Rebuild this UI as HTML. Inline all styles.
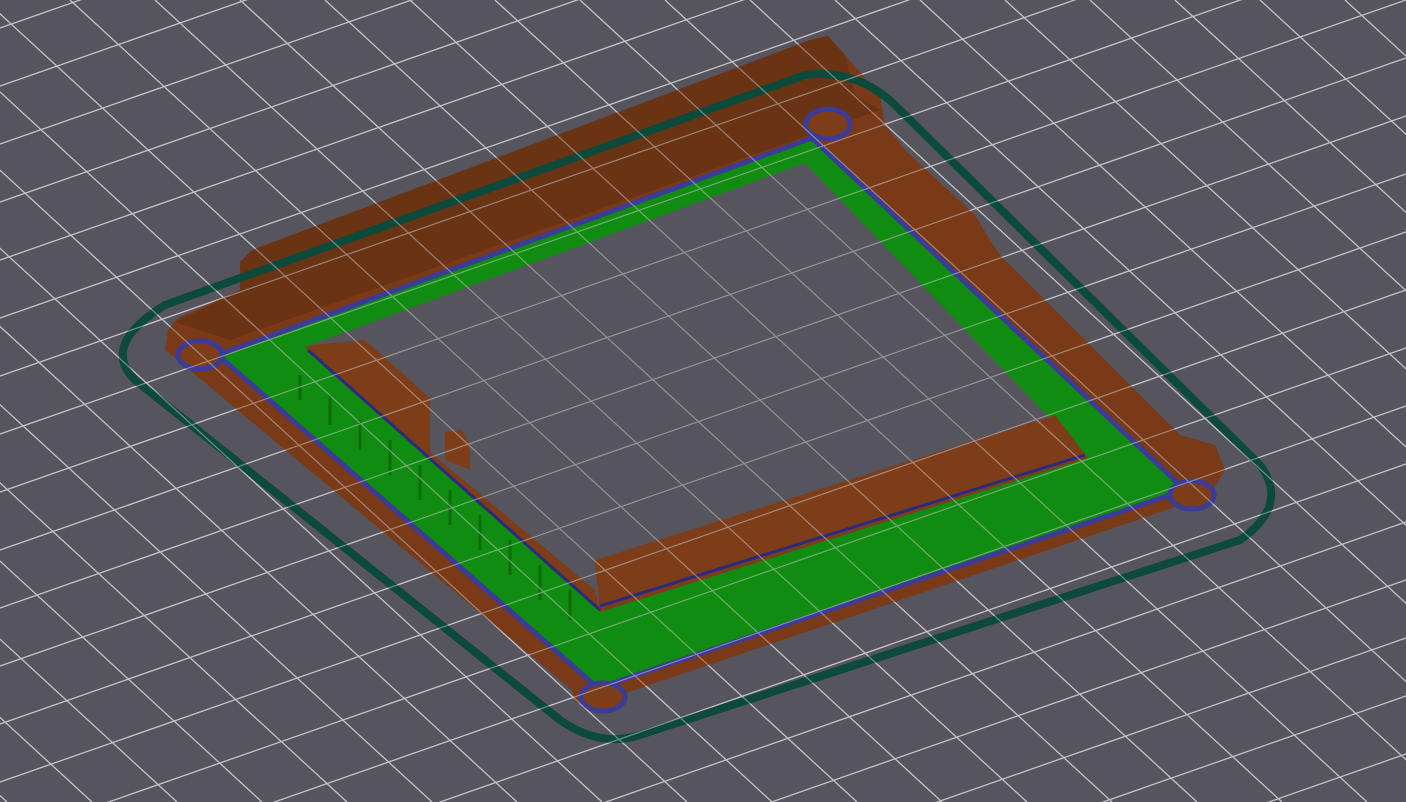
<!DOCTYPE html>
<html><head><meta charset="utf-8"><style>html,body{margin:0;padding:0;background:#56555d;overflow:hidden;width:1406px;height:802px}svg{display:block}</style></head>
<body>
<svg width="1406" height="802" viewBox="0 0 1406 802" xmlns="http://www.w3.org/2000/svg">
<rect width="1406" height="802" fill="#56555d"/>
<defs>
<g id="grid" stroke="#c4c4c8" stroke-width="1.2" fill="none">
<path d="M0 -30L1406 -522M0 28L1406 -464M0 86L1406 -406M0 144L1406 -348M0 202L1406 -290M0 260L1406 -232M0 318L1406 -174M0 376L1406 -116M0 434L1406 -58M0 492L1406 0M0 550L1406 58M0 608L1406 116M0 666L1406 174M0 724L1406 232M0 782L1406 290M0 840L1406 348M0 898L1406 406M0 956L1406 464M0 1014L1406 522M0 1072L1406 580M0 1130L1406 638M0 1188L1406 696M0 1246L1406 754M0 1304L1406 812"/>
<path d="M-950 0l872 802M-865 0l872 802M-780 0l872 802M-695 0l872 802M-610 0l872 802M-525 0l872 802M-440 0l872 802M-355 0l872 802M-270 0l872 802M-185 0l872 802M-100 0l872 802M-15 0l872 802M70 0l872 802M155 0l872 802M240 0l872 802M325 0l872 802M410 0l872 802M495 0l872 802M580 0l872 802M665 0l872 802M750 0l872 802M835 0l872 802M920 0l872 802M1005 0l872 802M1090 0l872 802M1175 0l872 802M1260 0l872 802M1345 0l872 802"/>
</g>
</defs>
<use href="#grid"/>
<!-- brown body -->
<path d="M168 330L178 318L240 290L240 262L252 250L810 40L828 36L845 55L880 95L885 125L905 150L975 215L990 240L1000 255L1180 435L1215 445L1225 470L1210 495L1190 502L620 695L605 712L575 702L572 690L185 366L165 350Z" fill="#7a3a17"/>
<path d="M240 262L252 250L810 40L828 36L845 55L855 95L880 110L230 340L175 322L240 290Z" fill="#6a3314"/>
<!-- skirt -->
<path d="M165 305 L805 75 Q860 68 900 110 L1260 465 Q1290 505 1240 540 L640 735 Q600 748 560 720 L135 380 Q100 345 165 305 Z" fill="none" stroke="#0c4a3b" stroke-width="8"/>
<!-- green top -->
<path d="M218 355L812 138L1185 490L598 688Z" fill="#108c10" stroke="#3b3b98" stroke-width="5"/>
<!-- hole -->
<path d="M305 347L805 163L1088 458L600 612Z" fill="#56555d"/>
<!-- bottom inner wall -->
<path d="M595 560L1055 415L1088 458L600 612Z" fill="#7e3d19"/>
<path d="M600 606L1085 455" stroke="#2a2a80" stroke-width="3"/>
<!-- left inner wall -->
<path d="M305 347L312 345L365 340L430 398L430 452L595 590L600 612Z" fill="#7e3d19"/>
<path d="M308 350L600 610" stroke="#2a2a80" stroke-width="3"/>
<path d="M445 432L462 430L470 445L470 470L445 460Z" fill="#7e3d19"/>
<g stroke="#0b6e0b" stroke-width="3">
<path d="M300 375v25M330 395v30M360 420v30M390 440v35M420 465v35M450 490v35M480 515v35M510 540v35M540 565v35M570 590v30"/>
</g>
<!-- holes -->
<g stroke="#3b3b98" stroke-width="5" fill="#7e3d19">
<ellipse cx="200" cy="355" rx="22" ry="14"/>
<ellipse cx="828" cy="124" rx="22" ry="15"/>
<ellipse cx="1192" cy="495" rx="22" ry="14"/>
<ellipse cx="603" cy="697" rx="22" ry="14"/>
</g>
<use href="#grid" opacity="0.55"/>
</svg>
</body></html>
